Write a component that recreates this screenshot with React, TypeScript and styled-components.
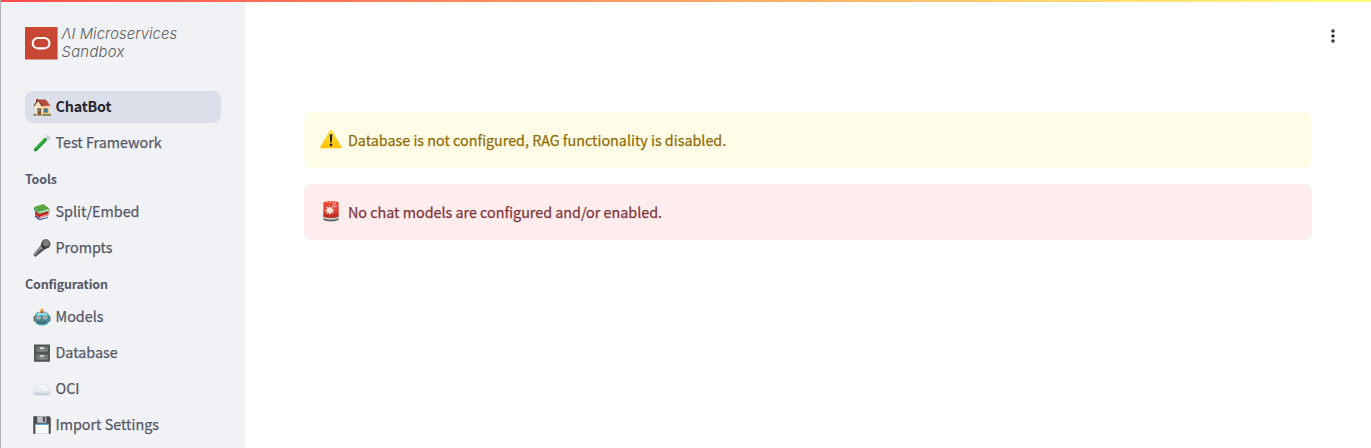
import React from "react";
import styled, { createGlobalStyle } from "styled-components";

const Global = createGlobalStyle`
  * { box-sizing: border-box; }
  body { margin: 0; background: #fff; overflow: hidden; font-family: "Noto Sans CJK SC", "Noto Sans", sans-serif; }
  svg { display: block; flex: none; }
`;
const Shell = styled.div`
  display: flex;
  flex-direction: column;
  height: 448px;
  border-left: 1px solid #b4b4b6;
`;
const Decoration = styled.div`
  height: 2px;
  flex: none;
  background: linear-gradient(90deg, #ff4b4b, #fffd80);
`;
const Body = styled.div`
  display: flex;
  flex: 1;
  min-height: 0;
`;
const Sidebar = styled.aside`
  width: 244px;
  flex: none;
  background: #f0f2f6;
  padding: 24px 24px 0;
`;
const Brand = styled.div`
  display: flex;
  height: 65px;
`;
const BrandName = styled.div`
  margin: -1px 0 0 3.5px;
  font: italic 300 14.8px/18px Inter, sans-serif;
  color: #5c5c60;
  white-space: nowrap;
`;
const BrandLine = styled.div<{ $spacing: number }>`
  letter-spacing: ${(p) => p.$spacing}px;
`;
const List = styled.nav`
  display: flex;
  flex-direction: column;
  gap: 4px;
`;
const Item = styled.a<{ $active?: boolean }>`
  display: flex;
  align-items: center;
  gap: 4.5px;
  height: 32px;
  padding-left: 8px;
  border-radius: 8px;
  background: ${(p) => (p.$active ? "#dbdfe9" : "transparent")};
  color: ${(p) => (p.$active ? "#262730" : "#555867")};
  font-size: 14.33px;
  font-weight: ${(p) => (p.$active ? 700 : 400)};
  line-height: 30px;
  white-space: nowrap;
`;
const Label = styled.span<{ $bold?: boolean }>`
  padding-bottom: 2px;
  letter-spacing: ${(p) => (p.$bold ? -0.2 : 0)}px;
  -webkit-text-stroke: ${(p) => (p.$bold ? 0 : 0.25)}px currentColor;
`;
const Section = styled.h2`
  margin: 0;
  height: 37px;
  padding-top: 5px;
  font-size: 12.5px;
  font-weight: 700;
  line-height: 30px;
  letter-spacing: -0.17px;
  color: #555867;
`;
const Main = styled.main`
  flex: 1;
  display: flex;
  flex-direction: column;
`;
const Toolbar = styled.header`
  height: 110px;
  padding: 25px 30px 0 0;
  display: flex;
  justify-content: flex-end;
  align-items: flex-start;
`;
const Alerts = styled.section`
  display: flex;
  flex-direction: column;
  gap: 16px;
  padding: 0 59px;
`;
const Alert = styled.div<{ $bg: string; $fg: string }>`
  height: 56px;
  border-radius: 8px;
  padding: 0 16px;
  display: flex;
  align-items: center;
  gap: 6px;
  background: ${(p) => p.$bg};
  color: ${(p) => p.$fg};
  font-size: 14.33px;
  line-height: 24px;
  white-space: nowrap;
`;
const AlertText = styled.span`
  -webkit-text-stroke: 0.25px currentColor;
`;
const AlertIcon = styled.div`
  width: 22px;
  height: 22px;
  margin-top: -3px;
`;

const House = () => (
  <svg width="18" height="18" viewBox="0 0 18 18">
    <path d="M3 1h2v5H3z" fill="#a83b2c" />
    <path d="M2 8 5.2 3l7 .2 4.3 5V17H2z" fill="#f0d9a6" />
    <path d="M4.6 3.4 9 9v8H2V8z" fill="#f8e8c1" />
    <path d="m5 1.4 7.6.1 5 6.3-8.3.2z" fill="#b54b3a" />
    <path d="M5 2 .8 8M5 2l4.4 6.4" stroke="#7d352a" strokeWidth="1.1" />
    <path d="M4.4 10.2h3.8V17H4.4z" fill="#8e512f" />
    <path d="M10.8 10.5h4v4h-4z" fill="#377bab" stroke="#b77e4b" strokeWidth=".7" />
    <path d="M5.4 11.2h1.9v2.6H5.4z" fill="#4c8cb8" />
    <path d="M.5 15.8h3V18h-3zM9.5 15.8H18V18H9.5z" fill="#8a8a58" />
    <path d="M3.5 17h7v1h-7z" fill="#a19b91" />
  </svg>
);
const Tube = () => (
  <svg width="18" height="18" viewBox="0 0 18 18">
    <path d="M2.8 15.6 14.6 3.4" stroke="#ccd4d6" strokeWidth="3.6" strokeLinecap="round" />
    <path d="M2.6 15.6 12 5.8" stroke="#128c22" strokeWidth="3.3" strokeLinecap="round" />
    <path d="m2.6 15 9.4-9.6" stroke="#45c946" strokeWidth="1.2" />
    <path d="m13 1.4 3.6 3.6" stroke="#b3bdc0" strokeWidth="1.3" strokeLinecap="round" />
    <path d="m12.5 3.4 2-1.8" stroke="#fff" strokeWidth="1" />
  </svg>
);
const Books = () => (
  <svg width="18" height="18" viewBox="0 0 18 18">
    <path d="m2 12 4 3.3 9-2.5V15l-8.7 2.3L2 14z" fill="#3d4c94" />
    <path d="m5.8 14.6 9-2.2v1.8L6.2 16.3z" fill="#d5d8e6" />
    <path d="M2 8 6 11l9.5-3v4.2L6.2 15 2 11.6z" fill="#c52b22" />
    <path d="m7.4 13.4 7.6-2.2v.9l-7.6 2.1z" fill="#eee1dd" />
    <path d="m1 4 4.6 5.4L16.4 6v2.2L6 11 1 6.4z" fill="#338c39" />
    <path d="m6 9.3 10-3v1.2L6 10.3z" fill="#ecf0df" />
    <path d="M1 4 10.5 1l6 4.7L5.8 9z" fill="#56a642" />
  </svg>
);
const Mic = () => (
  <svg width="18" height="18" viewBox="0 0 18 18">
    <path d="M8.2 5.8 12.4 9.9 2.4 18 .2 15.8z" fill="#555557" />
    <path d="M8.8 7 1.5 16.2" stroke="#98989a" strokeWidth="1.3" />
    <circle cx="12.8" cy="5" r="4.7" fill="#4c4c4e" />
    <circle cx="13.2" cy="4" r="3.1" fill="#8d8d8f" />
    <path d="m10.3 2.4 5.3 5M12.4 1 16.7 5.2M10.2 5.3 14.8 1.1M12 7 16.5 3" stroke="#59595b" strokeWidth=".5" />
    <path d="m8.2 5.4 4.5 4.4" stroke="#303032" strokeWidth="1.3" />
    <path d="m7.8 10.2 1-1" stroke="#e9e9e9" strokeWidth="1" />
  </svg>
);
const Robot = () => (
  <svg width="18" height="18" viewBox="0 0 18 18">
    <path d="M.6 8h2v5.5h-2zM15.4 8h2v5.5h-2z" fill="#9a5754" />
    <path d="M1.8 8.2C1.8 5.2 5 3.5 9 3.5s7.2 1.7 7.2 4.7V12c0 3.4-2.7 5.4-7.2 5.4S1.8 15.4 1.8 12z" fill="#3f98a8" />
    <path d="M3 7.2C3.9 4.9 6.4 4 9 4s5.1.9 6 3.2z" fill="#a3dce0" />
    <path d="M7.4 3.2h3.2v1.8H7.4z" fill="#bd4d34" />
    <circle cx="9" cy="2.1" r="1.6" fill="#eda52b" />
    <circle cx="5.7" cy="9.4" r="1.9" fill="#b9eceb" /><circle cx="12.3" cy="9.4" r="1.9" fill="#b9eceb" />
    <circle cx="5.7" cy="9.4" r="1.1" fill="#d76057" /><circle cx="12.3" cy="9.4" r="1.1" fill="#d76057" />
    <path d="m9 9.5 1.2 2H7.8z" fill="#cf5749" />
    <path d="M4.6 12.8h8.8v1.6c-2.4 1.6-6.4 1.6-8.8 0z" fill="#425a63" />
    <path d="M6.2 13.8h5.6" stroke="#a5babf" strokeWidth=".7" strokeDasharray="1 .6" />
  </svg>
);
const Cabinet = () => (
  <svg width="18" height="18" viewBox="0 0 18 18">
    <path d="M1 .5h16v17.3H1z" fill="#535958" />
    <path d="M2.7 2h12.6v6.4H2.7zM2.7 10h12.6v6.4H2.7z" fill="#747b79" stroke="#454b4a" strokeWidth=".7" />
    <path d="M7 3.2h4.2v1.7H7zM7 11.2h4.2v1.6H7z" fill="#e1e3df" />
    <path d="M6.5 6.4h5.3M6.5 14.4h5.3" stroke="#9aa09e" strokeWidth=".9" />
  </svg>
);
const Cloud = () => (
  <svg width="18" height="18" viewBox="0 0 18 18">
    <defs><linearGradient id="cloud" x2="0" y2="1"><stop stopColor="#fff" /><stop offset=".55" stopColor="#f1f5f8" /><stop offset="1" stopColor="#bccad8" /></linearGradient></defs>
    <path d="M3.5 15C1.5 15 .2 13.8.2 12.2c0-1.7 1.2-2.6 2.8-2.6.1-1.5 1.1-2.3 2.5-2.2C6 5.2 7.4 4 9.4 4c2.3 0 3.9 1.5 4 3.8 1.2-.2 2.1.6 2.2 1.8 1.4.2 2.2 1.2 2.2 2.5 0 1.7-1.3 2.9-3.3 2.9z" fill="url(#cloud)" stroke="#c8d5e0" strokeWidth=".6" />
    <path d="M7.5 10.5c.2-1.7 2.4-2.1 3.4-.9M3.4 9.8c1-.2 1.8.1 2.2.9" fill="none" stroke="#ccd8e3" strokeWidth=".6" />
    <path d="M3.4 14.4h11.4" stroke="#bccbda" strokeWidth=".9" />
  </svg>
);
const Floppy = () => (
  <svg width="18" height="18" viewBox="0 0 18 18">
    <path d="M.3.3h15.9l1.5 1.5v16H.3z" fill="#47494d" />
    <path d="M4.2.3h9.2v6.4H4.2z" fill="#bfc4c8" /><path d="M9.8.9h2.3v4.8H9.8z" fill="#4b4f54" />
    <path d="M2.4 8.4h13.3v9.4H2.4z" fill="#fafbfc" /><path d="M2.4 7.6h13.3v1.4H2.4z" fill="#63a8da" />
    <path d="M3.4 12h11.2M3.4 14.4h11.2" stroke="#e3e7eb" strokeWidth=".5" />
  </svg>
);
const Warning = () => (
  <svg width="22" height="22" viewBox="0 0 22 22">
    <defs><linearGradient id="warn" x2="0" y2="1"><stop stopColor="#ffe15a" /><stop offset="1" stopColor="#fdc100" /></linearGradient></defs>
    <path d="M9.9 2.1c.5-.9 1.7-.9 2.2 0l9.5 16.8c.4.8 0 1.4-.9 1.4H1.3c-.9 0-1.3-.6-.9-1.4z" fill="url(#warn)" />
    <path d="M9.7 6.2h2.6l-.5 8h-1.6z" fill="#222522" /><circle cx="11" cy="16.9" r="1.4" fill="#222522" />
  </svg>
);
const Siren = () => (
  <svg width="22" height="22" viewBox="0 0 22 22">
    <defs><linearGradient id="siren" x2="0" y2="1"><stop stopColor="#e8402f" /><stop offset=".6" stopColor="#e04636" /><stop offset="1" stopColor="#b81f18" /></linearGradient></defs>
    <ellipse cx="11" cy="18.9" rx="7.8" ry="2.7" fill="#5f6263" />
    <path d="M3.2 16h15.6v2c-3.4 2.4-12.2 2.4-15.6 0z" fill="#c3c7c7" />
    <path d="M3.5 2.4C3.8.8 18 .8 18.5 2.4l.3 13.8c-2.8 2-12.8 2-15.6 0z" fill="url(#siren)" />
    <path d="M4.5 2.6c3-1.2 10-1.2 13 0-2.7 1-10.3 1-13 0z" fill="#f0735d" />
    <path d="m9.6 5 .8 3 2.7-1.4-1.2 2.6 3.2.6-2.8 1.2 1.6 2.6-2.9-1.1-1.2 3-1-2.8-2.7 1.2 1.2-2.5-2.7-.9 2.9-.9L6 6.4l2.7 1.4z" fill="#ffe9e2" />
    <path d="M12.8 6.4c.3-2 1.4-2.8 3-2.6M14.2 7.2c.5-1.2 1.6-1.5 2.8-1" fill="none" stroke="#ffc4b6" strokeWidth="1.1" />
  </svg>
);
const Logo = () => (
  <svg width="33" height="34" viewBox="0 0 33 34">
    <path d="M0 1h32.6v32.6H0z" fill="#c74634" />
    <rect x="7.7" y="12" width="16.8" height="10.4" rx="5.2" fill="none" stroke="#fff" strokeWidth="2.1" />
  </svg>
);
const Dots = () => (
  <svg width="16" height="18" viewBox="0 0 16 18" fill="#31333f">
    <circle cx="8" cy="4" r="1.75" /><circle cx="8" cy="9" r="1.75" /><circle cx="8" cy="14" r="1.75" />
  </svg>
);

type Entry = { icon: React.ReactNode; label: string; active?: boolean };
const pages: Entry[] = [
  { icon: <House />, label: "ChatBot", active: true },
  { icon: <Tube />, label: "Test Framework" },
];
const tools: Entry[] = [
  { icon: <Books />, label: "Split/Embed" },
  { icon: <Mic />, label: "Prompts" },
];
const configuration: Entry[] = [
  { icon: <Robot />, label: "Models" },
  { icon: <Cabinet />, label: "Database" },
  { icon: <Cloud />, label: "OCI" },
  { icon: <Floppy />, label: "Import Settings" },
];
const Menu = ({ entries }: { entries: Entry[] }) => (
  <List>
    {entries.map((e) => (
      <Item key={e.label} $active={e.active}>{e.icon}<Label $bold={e.active}>{e.label}</Label></Item>
    ))}
  </List>
);

export default function App() {
  return (
    <>
      <Global />
      <Shell>
        <Decoration />
        <Body>
          <Sidebar>
            <Brand>
              <Logo />
              <BrandName>
                <BrandLine $spacing={0.07}>ΛI Microservices</BrandLine>
                <BrandLine $spacing={0.3}>Sandbox</BrandLine>
              </BrandName>
            </Brand>
            <Menu entries={pages} />
            <Section>Tools</Section>
            <Menu entries={tools} />
            <Section>Configuration</Section>
            <Menu entries={configuration} />
          </Sidebar>
          <Main>
            <Toolbar><Dots /></Toolbar>
            <Alerts>
              <Alert $bg="#fffce7" $fg="#926c05">
                <AlertIcon><Warning /></AlertIcon>
                <AlertText>Database is not configured, RAG functionality is disabled.</AlertText>
              </Alert>
              <Alert $bg="#ffecec" $fg="#7d353b">
                <AlertIcon><Siren /></AlertIcon>
                <AlertText>No chat models are configured and/or enabled.</AlertText>
              </Alert>
            </Alerts>
          </Main>
        </Body>
      </Shell>
    </>
  );
}
